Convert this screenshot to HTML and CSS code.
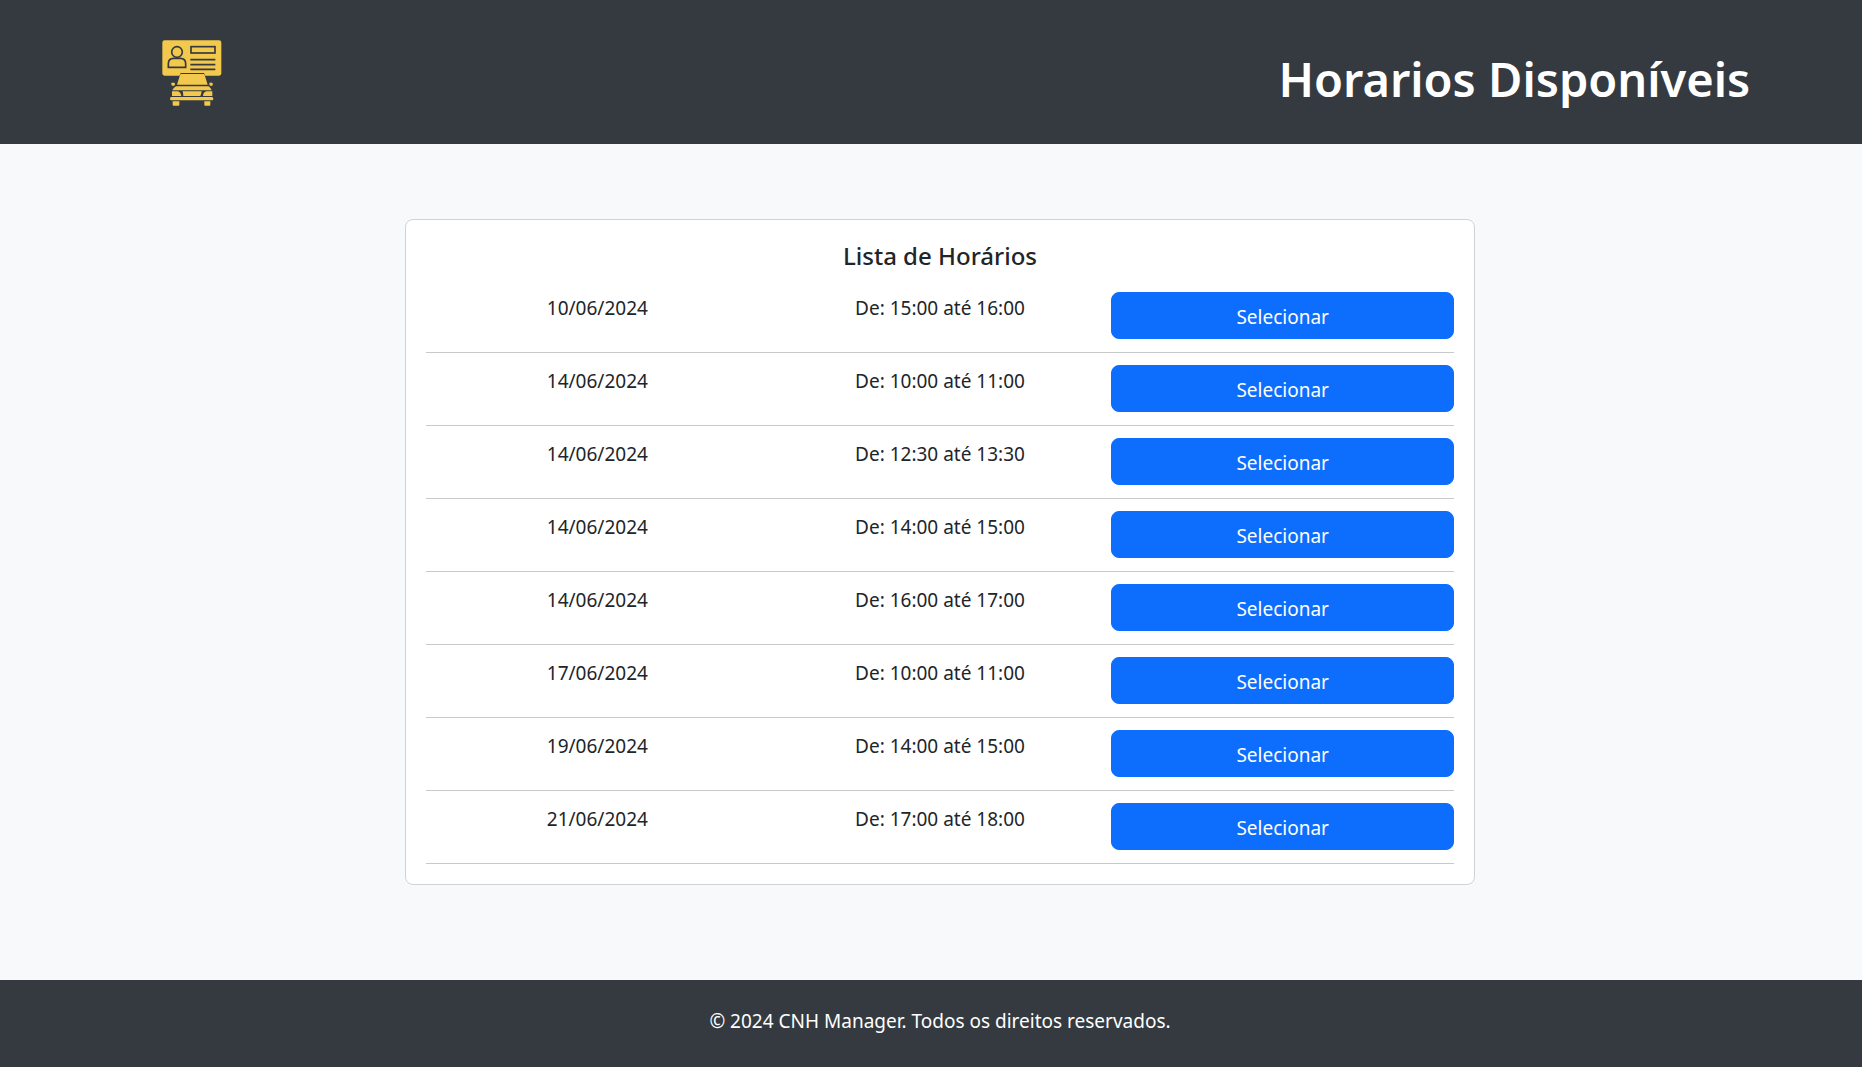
FILE: index.html
```html
<!DOCTYPE html>
<html lang="pt-BR">
<head>
  <meta charset="utf-8">
  <meta name="viewport" content="width=device-width, initial-scale=1">
  <title>Horarios Disponíveis</title>
  <link rel="stylesheet" href="styles.css">
</head>
<body>
  <header class="site-header">
    <a class="logo" href="#" aria-label="CNH Manager">
      <svg class="logo-icon" viewBox="36 28 180 198" aria-hidden="true">
        <rect class="fill" x="37" y="29" width="177" height="106" rx="7"/>
        <g class="line">
          <circle cx="81" cy="64" r="16"/>
          <path d="M55 110V99Q55 83 71 83H91Q107 83 107 99V110Z"/>
          <rect x="123" y="48" width="72" height="19"/>
          <path d="M121 87H196M121 102H196M121 116H196"/>
        </g>
        <path class="cut" d="M92 127H162L177 164H76Z"/>
        <path class="fill" d="M94 130H160Q163 130 164 133L173 162H81L90 133Q91 130 94 130ZM65 156H72Q75 156 75 160T72 165H67Q64 165 64 160T65 156ZM182 156H187Q190 160 187 165H181Q178 165 178 160T182 156ZM78 167H176Q182 172 185 179H67Q70 172 78 167ZM66 182H83Q92 184 94 196H66ZM98 182H155Q154 190 151 196H100Q100 188 98 182ZM159 195Q160 184 170 182H187V196H159ZM64 199H186Q190 199 190 204T186 209H64Q60 209 60 204T64 199ZM68 212H88V222Q88 225 85 225H71Q68 225 68 222ZM163 212H181V222Q181 225 178 225H166Q163 225 163 222Z"/>
      </svg>
    </a>
    <h1 class="page-title">Horarios Disponíveis</h1>
  </header>

  <main class="content">
    <section class="card">
      <h2 class="card-title" id="list-title">Lista de Horários</h2>
      <table class="schedule" aria-labelledby="list-title">
        <tbody>
          <tr><td>10/06/2024</td><td>De: 15:00 até 16:00</td><td><button class="btn" type="button">Selecionar</button></td></tr>
          <tr><td>14/06/2024</td><td>De: 10:00 até 11:00</td><td><button class="btn" type="button">Selecionar</button></td></tr>
          <tr><td>14/06/2024</td><td>De: 12:30 até 13:30</td><td><button class="btn" type="button">Selecionar</button></td></tr>
          <tr><td>14/06/2024</td><td>De: 14:00 até 15:00</td><td><button class="btn" type="button">Selecionar</button></td></tr>
          <tr><td>14/06/2024</td><td>De: 16:00 até 17:00</td><td><button class="btn" type="button">Selecionar</button></td></tr>
          <tr><td>17/06/2024</td><td>De: 10:00 até 11:00</td><td><button class="btn" type="button">Selecionar</button></td></tr>
          <tr><td>19/06/2024</td><td>De: 14:00 até 15:00</td><td><button class="btn" type="button">Selecionar</button></td></tr>
          <tr><td>21/06/2024</td><td>De: 17:00 até 18:00</td><td><button class="btn" type="button">Selecionar</button></td></tr>
        </tbody>
      </table>
    </section>
  </main>

  <footer class="site-footer">
    <p>© 2024 CNH Manager. Todos os direitos reservados.</p>
  </footer>
</body>
</html>
```
FILE: styles.css
```css
* {
  box-sizing: border-box;
}

body {
  display: flex;
  flex-direction: column;
  min-height: 100vh;
  margin: 0;
  background: #f8f9fa;
  color: #212529;
  font: 400 19px/32px "Segoe UI", "Noto Sans", sans-serif;
}

h1,
h2,
p {
  margin: 0;
}

.site-header {
  display: flex;
  justify-content: space-between;
  align-items: center;
  padding: 40px 6% 38px 162px;
  background: #343a40;
  color: #fff;
}

.logo {
  display: block;
}

.logo-icon {
  display: block;
  width: 60px;
  height: 66px;
}

.fill {
  fill: #f2c94c;
}

.cut {
  fill: #343a40;
}

.line {
  fill: none;
  stroke: #343a40;
  stroke-width: 5;
}

.page-title {
  padding-top: 12px;
  font-size: 47px;
  font-weight: 600;
  line-height: 50px;
}

.content {
  flex: 1;
  padding: 75px 20px 75px 38px;
}

.card {
  max-width: 1070px;
  margin: 0 auto;
  padding: 20px;
  border: 1px solid #d0d2d4;
  border-radius: 8px;
  background: #fff;
  text-align: center;
}

.card-title {
  margin-bottom: 8px;
  font-size: 24px;
  font-weight: 500;
  line-height: 32px;
}

.schedule {
  width: 100%;
  border-spacing: 0;
  table-layout: fixed;
}

.schedule td {
  padding: 12px 0 13px;
  border-bottom: 1px solid #c8c9ca;
  vertical-align: top;
}

.btn {
  display: block;
  width: 100%;
  padding: 10px 15px 6px;
  border: 1px solid #0d6efd;
  border-radius: 8px;
  background: #0d6efd;
  color: #fff;
  font: inherit;
  line-height: 29px;
  cursor: pointer;
}

.site-footer {
  padding: 25px 0 30px 18px;
  background: #343a40;
  color: #fff;
  text-align: center;
}
```
